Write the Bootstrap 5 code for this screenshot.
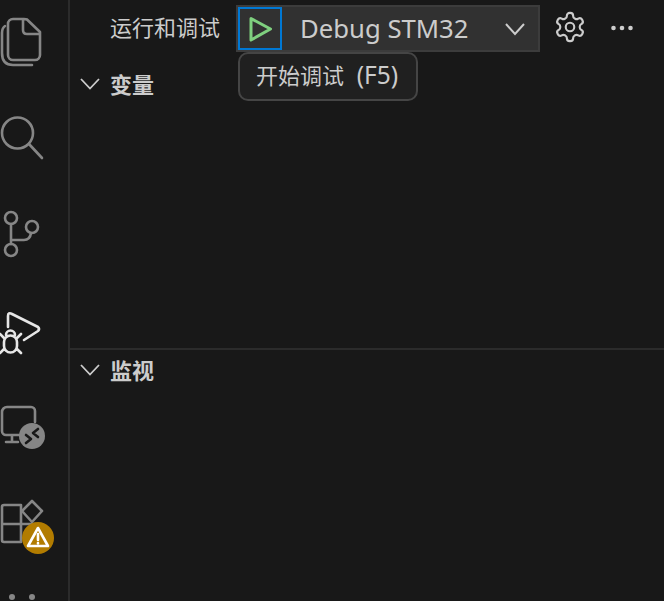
<!DOCTYPE html>
<html lang="zh">
<head>
<meta charset="utf-8">
<title>运行和调试</title>
<link href="https://cdn.jsdelivr.net/npm/bootstrap@5.3.0/dist/css/bootstrap.min.css" rel="stylesheet">
<style>
html,body{height:100%;margin:0;overflow:hidden;background:#181818}
body{font-family:"Noto Sans","Noto Sans CJK SC",sans-serif;color:#ccc}
.shell{height:601px;width:664px;background:#181818}
.actbar{width:70px;flex:none;border-right:2px solid #2b2b2b;overflow:hidden}
.actbar svg{display:block;flex:none}
.ic{fill:none;stroke:#868686;stroke-width:2.6;stroke-linecap:round;stroke-linejoin:round}
.ic-on{stroke:#e6e6e6}
.mainpane{min-width:0;position:relative}
.topbar{height:57px;padding-left:40px;padding-top:5px}
.view-title{font-size:22px;width:126px;line-height:44px;white-space:nowrap}
.dbg-box{width:304px;height:47px;background:#313131;border:2px solid #3c3c3c}
.dbg-play{width:44px;height:43px;border:2px solid #0078d4;flex:none}
.dbg-name{font-size:25.7px;padding-left:18px;color:#ccc;white-space:nowrap;line-height:43px}
.dbg-chev{margin-right:11px}
.tool-gear{margin-left:13px;margin-top:5px}
.tool-more{margin-left:23px;margin-top:8px}
.sect-a{height:293px;border-bottom:2px solid #2b2b2b}
.sect-head{height:44px;padding-left:10px}
.sect-a .sect-head{padding-top:9px}
.sect-b .sect-head{height:40px}
.sect-name{font-size:22px;font-weight:700;margin-left:10px;color:#ccc;line-height:40px}
.tipbox{position:absolute;left:168px;top:52px;height:49px;width:180px;background:#202020;border:2px solid #454545;border-radius:10px;font-size:22px;line-height:42px;padding-left:16px;white-space:nowrap;color:#ccc}
.tip-key{font-size:24.500px;margin-left:7px}
</style>
</head>
<body>
<div class="shell d-flex">
  <nav class="actbar d-flex flex-column">
    <svg width="68" height="90" viewBox="0 0 68 90" class="ic">
      <path d="M24 19H13a5 5 0 0 0-5 5V55a5 5 0 0 0 5 5H35a5 5 0 0 0 5-5V32L27 19.500Q26 19 24 19ZM23 19V30q0 4 4 4H40"/>
      <path d="M5 26Q2 28 2 33V53Q2 65 13 65H32"/>
    </svg>
    <svg width="68" height="96" viewBox="0 90 68 96" class="ic">
      <circle cx="17.500" cy="133" r="15.500"/><path d="M29 144L42 158"/>
    </svg>
    <svg width="68" height="96" viewBox="0 186 68 96" class="ic">
      <circle cx="11" cy="218" r="6"/><circle cx="32" cy="227" r="6"/><circle cx="11" cy="250" r="6"/>
      <path d="M11 224V244M11 240H24Q30 240 31 233"/>
    </svg>
    <svg width="68" height="96" viewBox="0 282 68 96" class="ic ic-on">
      <path d="M8 327V316Q8 312 12 314L38 327Q40 329 38 331L24 340"/>
      <path d="M4 342a6.500 6.500 0 0 1 13 0V346a6.500 6.500 0 0 1-13 0ZM6 335a4.500 4.500 0 0 1 9 0M4 338L0 334M17 338L21 334M4 349L0 353M17 349L21 353"/>
    </svg>
    <svg width="68" height="96" viewBox="0 378 68 96" class="ic">
      <path d="M22 407H7a5 5 0 0 0-5 5V431a4 4 0 0 0 4 4H20M35 422V411a4 4 0 0 0-4-4H20M12 436V442M6 442H18"/>
      <circle cx="32" cy="436" r="13" fill="#868686" stroke="none"/>
      <path d="M26 435L31 439L26 443M38 429L33 433L38 437" stroke="#181818"/>
    </svg>
    <svg width="68" height="96" viewBox="0 474 68 96" class="ic">
      <path d="M4 505H21V542H4a2 2 0 0 1-2-2V507a2 2 0 0 1 2-2ZM2 524H36M21 524V542"/>
      <path d="M32 501L42 511L32 522L22 511Z"/>
      <circle cx="38" cy="538" r="16" fill="#b27c00" stroke="none"/>
      <path d="M38 528L48 546H28Z" stroke="#fff" fill="none"/>
      <path d="M38 534V540M38 543V543.500" stroke="#fff"/>
    </svg>
    <svg width="68" height="31" viewBox="0 570 68 31">
      <circle cx="12" cy="597" r="3" fill="#868686"/><circle cx="32" cy="597" r="3" fill="#868686"/>
    </svg>
  </nav>
  <main class="mainpane flex-grow-1 d-flex flex-column">
    <header class="topbar d-flex align-items-start">
      <div class="view-title">运行和调试</div>
      <div class="dbg-box d-flex align-items-center">
        <div class="dbg-play d-flex align-items-center justify-content-center">
          <svg width="26" height="26" viewBox="0 0 26 26" fill="none" stroke="#7fd07f" stroke-width="3" stroke-linejoin="round"><path d="M4 2.500L23.500 13L4 24Z"/></svg>
        </div>
        <div class="dbg-name flex-grow-1">Debug STM32</div>
        <svg class="dbg-chev" width="24" height="16" viewBox="0 0 24 16" fill="none" stroke="#ccc" stroke-width="2"><path d="M3 3L12 13L21 3"/></svg>
      </div>
      <svg class="tool-gear" width="34" height="34" viewBox="0 0 24 24" fill="none" stroke="#ccc" stroke-width="1.500" stroke-linejoin="round"><path d="M12.220 2h-.44a2 2 0 0 0-2 2v.18a2 2 0 0 1-1 1.730l-.43.25a2 2 0 0 1-2 0l-.15-.08a2 2 0 0 0-2.730.73l-.22.38a2 2 0 0 0 .73 2.730l.15.100a2 2 0 0 1 1 1.720v.51a2 2 0 0 1-1 1.740l-.15.090a2 2 0 0 0-.73 2.730l.22.38a2 2 0 0 0 2.730.73l.15-.08a2 2 0 0 1 2 0l.43.25a2 2 0 0 1 1 1.730V20a2 2 0 0 0 2 2h.44a2 2 0 0 0 2-2v-.18a2 2 0 0 1 1-1.730l.43-.25a2 2 0 0 1 2 0l.15.08a2 2 0 0 0 2.730-.73l.22-.39a2 2 0 0 0-.73-2.730l-.15-.08a2 2 0 0 1-1-1.740v-.5a2 2 0 0 1 1-1.740l.15-.090a2 2 0 0 0 .73-2.730l-.22-.38a2 2 0 0 0-2.730-.73l-.15.08a2 2 0 0 1-2 0l-.43-.25a2 2 0 0 1-1-1.730V4a2 2 0 0 0-2-2z"/><circle cx="12" cy="12" r="3"/></svg>
      <svg class="tool-more" width="24" height="28" viewBox="0 0 24 28" fill="#ccc"><circle cx="3.500" cy="15" r="2.300"/><circle cx="12" cy="15" r="2.300"/><circle cx="20.500" cy="15" r="2.300"/></svg>
    </header>
    <section class="sect-a">
      <div class="sect-head d-flex align-items-center">
        <svg width="20" height="12" viewBox="0 0 20 12" fill="none" stroke="#ccc" stroke-width="1.800"><path d="M1 1L10 10.500L19 1"/></svg>
        <span class="sect-name">变量</span>
      </div>
    </section>
    <section class="sect-b flex-grow-1">
      <div class="sect-head d-flex align-items-center">
        <svg width="20" height="12" viewBox="0 0 20 12" fill="none" stroke="#ccc" stroke-width="1.800"><path d="M1 1L10 10.500L19 1"/></svg>
        <span class="sect-name">监视</span>
      </div>
    </section>
    <div class="tipbox">开始调试 <span class="tip-key">(F5)</span></div>
  </main>
</div>
<script src="https://cdn.jsdelivr.net/npm/bootstrap@5.3.0/dist/js/bootstrap.bundle.min.js"></script>
</body>
</html>
